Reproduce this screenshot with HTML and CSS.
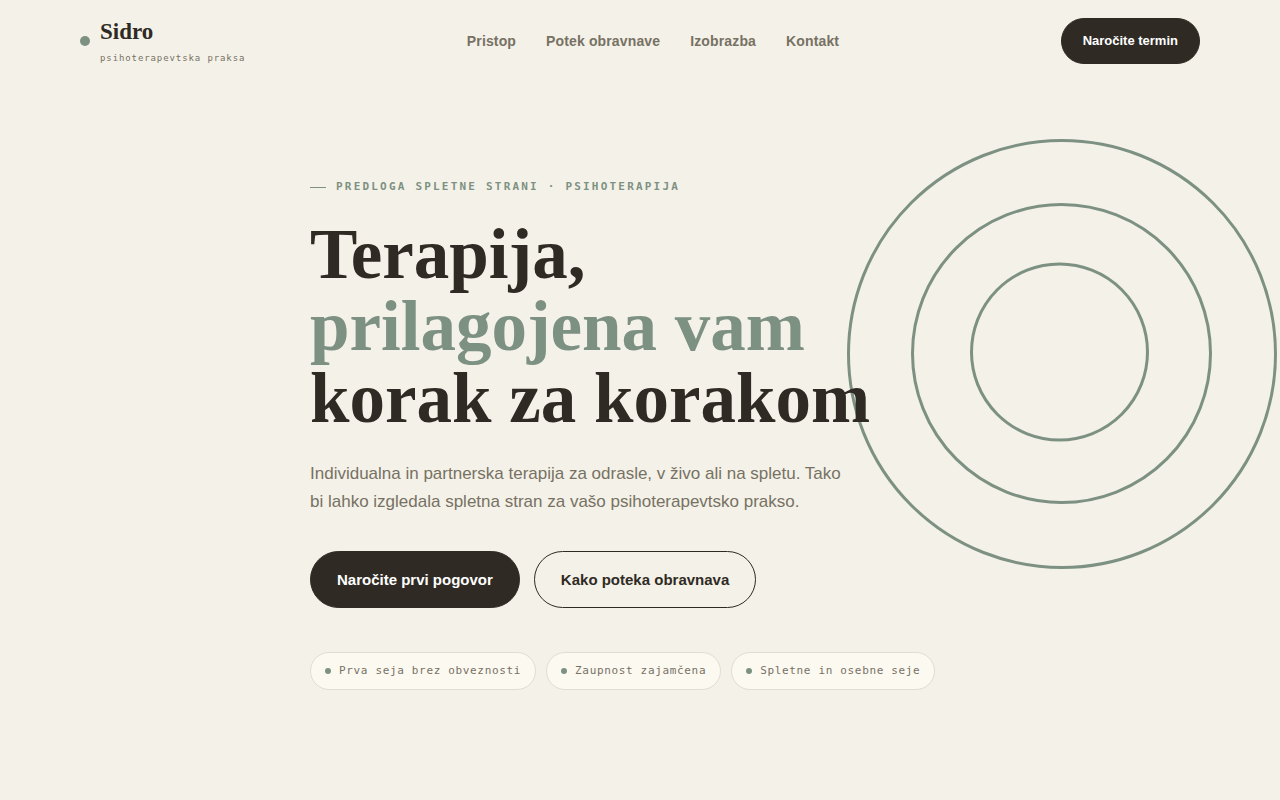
FILE: index.html
```html
<!DOCTYPE html>
<html lang="sl">
<head>
    <meta charset="UTF-8">
    <meta name="viewport" content="width=device-width, initial-scale=1.0">
    <title>Sidro – psihoterapevtska praksa</title>
    <link rel="stylesheet" href="styles.css">
</head>
<body>
    <header class="header">
        <a class="brand" href="#">
            <span class="brand-dot"></span>
            <span class="brand-text">
                <span class="brand-name">Sidro</span>
                <span class="brand-sub">psihoterapevtska praksa</span>
            </span>
        </a>
        <nav class="nav">
            <a href="#pristop">Pristop</a>
            <a href="#potek">Potek obravnave</a>
            <a href="#izobrazba">Izobrazba</a>
            <a href="#kontakt">Kontakt</a>
        </nav>
        <button class="btn btn-dark btn-small" type="button">Naročite termin</button>
    </header>

    <main class="hero">
        <svg class="rings" viewBox="0 0 430 430" fill="none" stroke="currentColor" stroke-width="3" aria-hidden="true">
            <circle cx="215" cy="215" r="213.5"/>
            <circle cx="214.5" cy="214.5" r="149"/>
            <circle cx="212.5" cy="213" r="88"/>
        </svg>
        <div class="hero-content">
            <p class="eyebrow">Predloga spletne strani · Psihoterapija</p>
            <h1>Terapija,<br><span class="accent">prilagojena vam</span><br>korak za korakom</h1>
            <p class="lead">Individualna in partnerska terapija za odrasle, v živo ali na spletu. Tako bi lahko izgledala spletna stran za vašo psihoterapevtsko prakso.</p>
            <div class="actions">
                <button class="btn btn-dark" type="button">Naročite prvi pogovor</button>
                <button class="btn btn-outline" type="button">Kako poteka obravnava</button>
            </div>
            <ul class="chips">
                <li>Prva seja brez obveznosti</li>
                <li>Zaupnost zajamčena</li>
                <li>Spletne in osebne seje</li>
            </ul>
        </div>
    </main>
</body>
</html>
```
FILE: styles.css
```css
:root {
    --bg: #f4f1e8;
    --ink: #2f2b24;
    --muted: #777164;
    --sage: #7d9183;
    --card: #fcf9f1;
    --line: #e2ddd1;
    --sans: "Liberation Sans", Arial, sans-serif;
    --serif: "Liberation Serif", Georgia, serif;
    --mono: "DejaVu Sans Mono", monospace;
}
* {
    box-sizing: border-box;
    margin: 0;
    padding: 0;
}
body {
    min-height: 100vh;
    background: var(--bg);
    color: var(--ink);
    font-family: var(--sans);
    overflow-x: hidden;
}
a {
    color: inherit;
    text-decoration: none;
}

/* Header */
.header {
    display: flex;
    align-items: center;
    justify-content: space-between;
    padding: 18px 80px;
}
.brand {
    display: flex;
    align-items: center;
    gap: 10px;
}
.brand-dot {
    width: 10px;
    height: 10px;
    border-radius: 50%;
    background: var(--sage);
}
.brand-text {
    display: flex;
    flex-direction: column;
    gap: 6px;
}
.brand-name {
    font-family: var(--serif);
    font-size: 23px;
    font-weight: bold;
    line-height: 28px;
}
.brand-sub {
    font-family: var(--mono);
    font-size: 9px;
    line-height: 12px;
    letter-spacing: 0.1em;
    color: var(--muted);
}
.nav {
    display: flex;
    gap: 30px;
    font-size: 14px;
    font-weight: bold;
    line-height: 18px;
    letter-spacing: 0.01em;
    color: var(--muted);
}
.nav a:hover {
    color: var(--ink);
}

/* Buttons */
.btn {
    padding: 19px 26px;
    border: 1px solid var(--ink);
    border-radius: 999px;
    font-family: var(--sans);
    font-size: 15px;
    font-weight: bold;
    line-height: 17px;
    cursor: pointer;
}
.btn-dark {
    background: var(--ink);
    color: #fff;
}
.btn-outline {
    background: transparent;
    color: var(--ink);
}
.btn-small {
    padding: 14px 21px;
    font-size: 13px;
    line-height: 16px;
}

/* Hero */
.hero {
    position: relative;
    padding: 96px 24px;
}
.rings {
    position: absolute;
    top: 57px;
    right: 3px;
    width: 430px;
    height: 430px;
    color: var(--sage);
}
.hero-content {
    position: relative;
    max-width: 660px;
    margin: 0 auto;
}
.eyebrow {
    display: flex;
    align-items: center;
    gap: 10px;
    margin-bottom: 22px;
    font-family: var(--mono);
    font-size: 11px;
    font-weight: bold;
    line-height: 18px;
    letter-spacing: 0.2em;
    text-transform: uppercase;
    color: var(--sage);
}
.eyebrow::before {
    content: "";
    width: 16px;
    height: 1px;
    background: var(--sage);
}
h1 {
    margin-bottom: 26px;
    font-family: var(--serif);
    font-size: 71px;
    font-weight: bold;
    line-height: 72px;
}
.accent {
    color: var(--sage);
}
.lead {
    max-width: 540px;
    margin-bottom: 35px;
    font-size: 17px;
    line-height: 28px;
    color: var(--muted);
}
.actions {
    display: flex;
    flex-wrap: wrap;
    gap: 14px;
    margin-bottom: 44px;
}
.chips {
    display: flex;
    flex-wrap: wrap;
    gap: 10px;
    list-style: none;
}
.chips li {
    display: flex;
    align-items: center;
    gap: 8px;
    padding: 10px 14px;
    border: 1px solid var(--line);
    border-radius: 999px;
    background: var(--card);
    font-family: var(--mono);
    font-size: 11px;
    line-height: 16px;
    letter-spacing: 0.06em;
    color: var(--muted);
}
.chips li::before {
    content: "";
    width: 6px;
    height: 6px;
    border-radius: 50%;
    background: var(--sage);
}
```
